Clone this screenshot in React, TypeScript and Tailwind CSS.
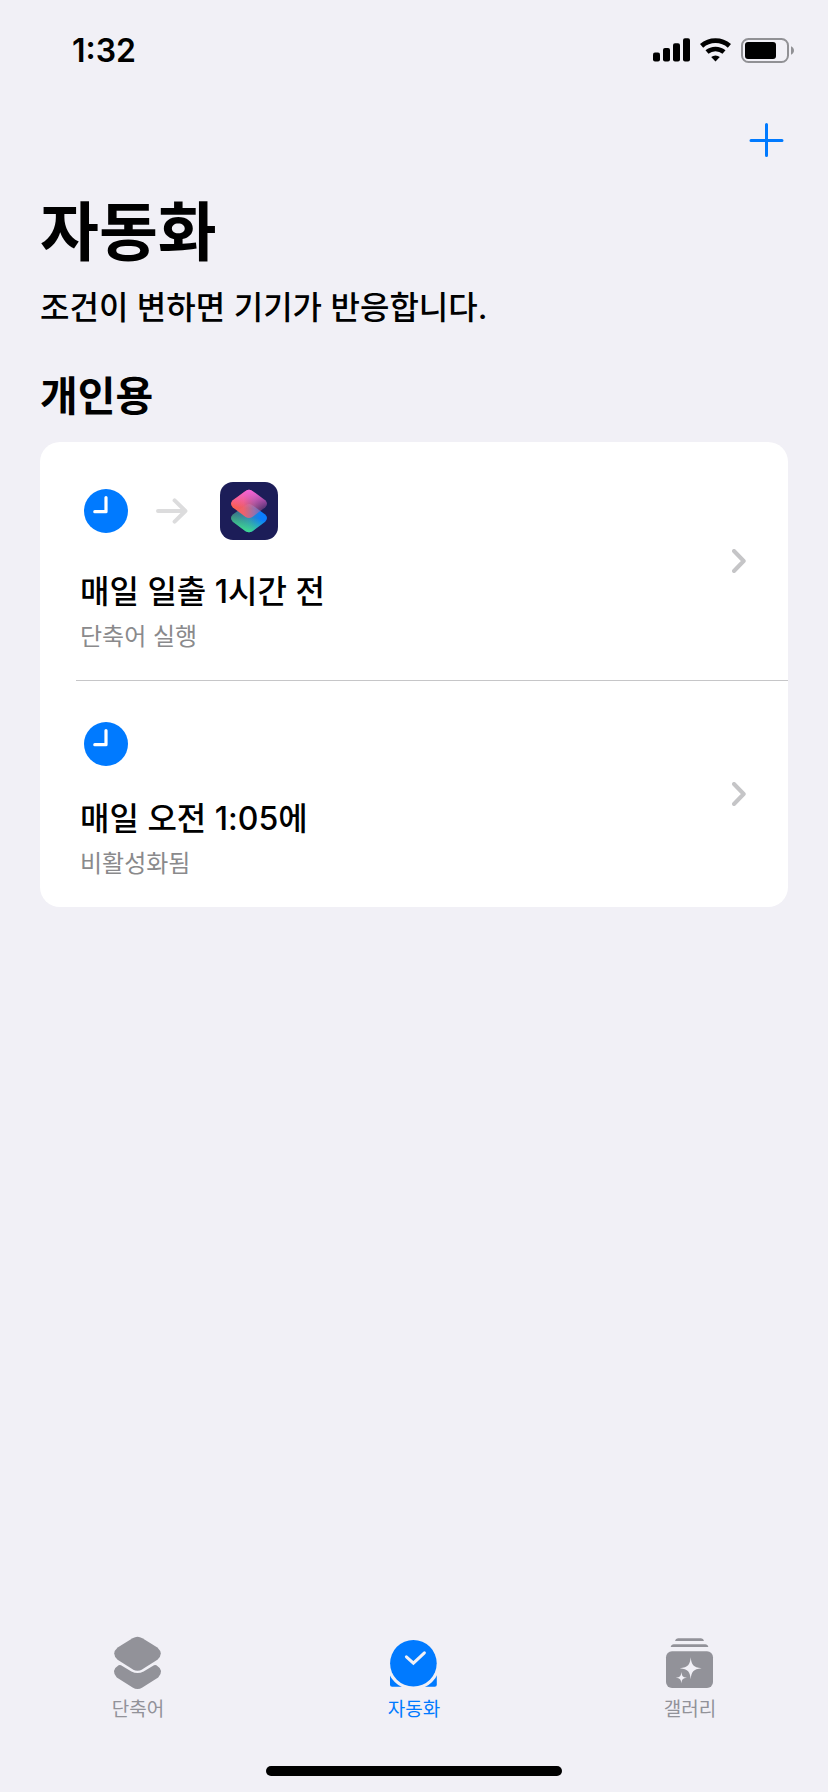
import type { ReactNode } from "react";
import clsx from "clsx";

/* ---------- Status bar icons ---------- */

function SignalIcon() {
  return (
    <svg width="37" height="24" viewBox="0 0 37 24" fill="currentColor" aria-hidden="true">
      <rect x="0" y="14.5" width="7" height="9" rx="2" />
      <rect x="10" y="10" width="7" height="13.5" rx="2" />
      <rect x="20" y="5.2" width="7" height="18.3" rx="2" />
      <rect x="30" y="0.2" width="7" height="23.3" rx="2" />
    </svg>
  );
}

function WifiIcon() {
  return (
    <svg width="31" height="24" viewBox="0 0 31 24" fill="none" stroke="currentColor" aria-hidden="true">
      <path d="M1.6 7.9A21 21 0 0 1 29.4 7.9" strokeWidth="4.8" />
      <path d="M7 14.1A13 13 0 0 1 24 14.1" strokeWidth="4.6" />
      <path d="M11.2 19.1A6.6 6.6 0 0 1 19.8 19.1L15.5 23.6Z" fill="currentColor" stroke="none" />
    </svg>
  );
}

function BatteryIcon() {
  return (
    <svg width="53" height="25" viewBox="0 0 53 25" aria-hidden="true">
      <rect x="1" y="1" width="46" height="23" rx="6.5" fill="none" stroke="#919195" strokeWidth="2" />
      <rect x="4" y="4" width="31" height="17" rx="3" fill="#000" />
      <path d="M50 8.2C51.8 9 53 10.6 53 12.5S51.8 16 50 16.8Z" fill="#919195" />
    </svg>
  );
}

/* ---------- Content icons ---------- */

function PlusIcon() {
  return (
    <svg width="36" height="36" viewBox="0 0 36 36" fill="none" stroke="currentColor" strokeWidth="3" strokeLinecap="round" aria-hidden="true">
      <path d="M18.5 2.5V33.5M3 18.5H34" />
    </svg>
  );
}

function ClockIcon() {
  return (
    <svg width="44" height="44" viewBox="0 0 44 44" aria-hidden="true">
      <circle cx="22" cy="22" r="22" fill="#007aff" />
      <path d="M22 8.5V22.7H10.8" fill="none" stroke="#fff" strokeWidth="3.2" strokeLinecap="round" strokeLinejoin="round" />
    </svg>
  );
}

function ArrowIcon() {
  return (
    <svg width="32" height="26" viewBox="0 0 32 26" fill="none" stroke="#dcdcdd" strokeWidth="4" strokeLinecap="round" strokeLinejoin="round" aria-hidden="true">
      <path d="M2 13H29M18.6 2.4L29.4 13L18.6 23.6" />
    </svg>
  );
}

function ChevronIcon() {
  return (
    <svg width="14" height="24" viewBox="0 0 14 24" fill="none" stroke="#c5c5c7" strokeWidth="4" strokeLinecap="round" strokeLinejoin="round" className="shrink-0" aria-hidden="true">
      <path d="M2 2L11.7 12L2 22" />
    </svg>
  );
}

const DIAMOND =
  "M25.6 8.9Q29 6.6 32.4 8.9L45.2 18.2Q48.8 21.8 45.2 25.4L32.4 34.9Q29 37.2 25.6 34.9L12.8 25.4Q9.2 21.8 12.8 18.2Z";

function ShortcutsAppIcon() {
  return (
    <svg width="58" height="58" viewBox="0 0 58 58" aria-hidden="true">
      <defs>
        <linearGradient id="lowerBase" x1="0" y1="0" x2="1" y2="0">
          <stop offset="0" stopColor="#4a8c8a" stopOpacity="0.7" />
          <stop offset="0.5" stopColor="#2f86b8" />
          <stop offset="0.85" stopColor="#0a7dff" />
        </linearGradient>
        <linearGradient id="lowerTint" x1="0.6" y1="0.45" x2="0.4" y2="1">
          <stop offset="0" stopColor="#3fe08f" stopOpacity="0" />
          <stop offset="1" stopColor="#3fe08f" />
        </linearGradient>
        <linearGradient id="upperBase" x1="0" y1="0.5" x2="1" y2="0.5">
          <stop offset="0" stopColor="#ff5f4a" />
          <stop offset="0.35" stopColor="#f7606a" stopOpacity="0.95" />
          <stop offset="0.65" stopColor="#c9689c" stopOpacity="0.7" />
          <stop offset="1" stopColor="#a04f98" stopOpacity="0.3" />
        </linearGradient>
        <linearGradient id="upperTint" x1="0.5" y1="0" x2="0.45" y2="0.65">
          <stop offset="0" stopColor="#f763dc" />
          <stop offset="1" stopColor="#f763dc" stopOpacity="0" />
        </linearGradient>
      </defs>
      <rect width="58" height="58" rx="13" fill="#1c1d58" />
      <g transform="translate(0 14.3)">
        <path d={DIAMOND} fill="url(#lowerBase)" />
        <path d={DIAMOND} fill="url(#lowerTint)" />
      </g>
      <path d={DIAMOND} fill="url(#upperBase)" />
      <path d={DIAMOND} fill="url(#upperTint)" />
    </svg>
  );
}

/* ---------- Tab icons ---------- */

function LayersIcon() {
  return (
    <svg width="56" height="56" viewBox="0 0 56 56" fill="currentColor" aria-hidden="true">
      <path d="M22.6 2.2Q27.5 -0.8 32.4 2.2L47.4 11.4Q54.2 17.6 47.4 23.8L32.4 33.2Q27.5 36.2 22.6 33.2L7.6 23.8Q0.8 17.6 7.6 11.4Z" />
      <path d="M8.6 29.3Q9.8 28.5 11 29.3L21.4 35.4Q27.5 38.6 33.6 35.4L44 29.3Q45.2 28.5 46.4 29.3Q54.6 34.4 48.2 41.4L32.4 51.5Q27.5 54.5 22.6 51.5L6.8 41.4Q0.4 34.4 8.6 29.3Z" />
    </svg>
  );
}

function AutomationIcon() {
  return (
    <svg width="56" height="56" viewBox="0 0 56 56" aria-hidden="true">
      <path d="M4 38.5H50.8V48.7Q50.8 50.8 48.7 50.8H6.1Q4 50.8 4 48.7Z" fill="currentColor" />
      <circle cx="27.4" cy="27.3" r="26.5" fill="#f1f0f6" />
      <circle cx="27.4" cy="27.3" r="23.3" fill="currentColor" />
      <path d="M20.4 20.8L27.4 27.2L38.4 16.8" fill="none" stroke="#f1f0f6" strokeWidth="3" strokeLinecap="round" strokeLinejoin="miter" />
    </svg>
  );
}

function GalleryIcon() {
  return (
    <svg width="56" height="56" viewBox="0 0 56 56" fill="currentColor" aria-hidden="true">
      <path d="M13 5Q13.6 2.2 16 2.2H39Q41.4 2.2 42 5Z" />
      <path d="M8.7 11Q9.3 8.2 11.8 8.2H43.2Q45.7 8.2 46.3 11Z" />
      <rect x="4" y="15.3" width="47" height="36.8" rx="6" />
      <g fill="#f1f0f6">
        <path d="M28.7 21.3C29.6 29 31 31.2 39.6 32.3C31 33.4 29.6 35.6 28.7 43.3C27.8 35.6 26.4 33.4 17.8 32.3C26.4 31.2 27.8 29 28.7 21.3Z" />
        <path d="M19.4 36C19.9 40 20.6 41.2 25 41.7C20.6 42.2 19.9 43.4 19.4 47.4C18.9 43.4 18.2 42.2 13.8 41.7C18.2 41.2 18.9 40 19.4 36Z" />
      </g>
    </svg>
  );
}

/* ---------- Automation row ---------- */

interface AutomationRowProps {
  title: string;
  subtitle: string;
  icons: ReactNode;
}

function AutomationRow({ title, subtitle, icons }: AutomationRowProps) {
  return (
    <a href="#" className="flex items-center justify-between pr-[42px] pl-10">
      <div className="pt-10 pb-7">
        <div className="flex min-h-[46px] items-center pl-1">{icons}</div>
        <h3 className="mt-8 text-[32px] leading-10 font-medium">{title}</h3>
        <p className="mt-2.5 text-2xl leading-[30px] text-[#8a8a8c]">{subtitle}</p>
      </div>
      <ChevronIcon />
    </a>
  );
}

const tabs = [
  { label: "단축어", icon: <LayersIcon />, active: false },
  { label: "자동화", icon: <AutomationIcon />, active: true },
  { label: "갤러리", icon: <GalleryIcon />, active: false },
];

export default function App() {
  return (
    <div className="flex min-h-screen flex-col bg-[#f1f0f6] font-['Inter','Noto_Sans_CJK_KR',sans-serif] text-black">
      {/* Status bar */}
      <div className="flex h-[100px] items-center justify-between pr-[34px] pl-[72px]">
        <span className="pt-0.5 text-[32px] leading-10 font-semibold">1:32</span>
        <div className="flex items-center gap-2.5">
          <SignalIcon />
          <WifiIcon />
          <BatteryIcon />
        </div>
      </div>

      <header className="flex h-20 items-center justify-end pr-11">
        <button type="button" aria-label="추가" className="text-[#007aff]">
          <PlusIcon />
        </button>
      </header>

      <main className="flex-1 px-10">
        <h1 className="mt-3 text-[64px] leading-20 font-bold">자동화</h1>
        <p className="mt-4 text-[32px] leading-10 font-medium">조건이 변하면 기기가 반응합니다.</p>
        <h2 className="mt-10 text-[41px] leading-14 font-bold">개인용</h2>

        <ul className="mt-[18px] overflow-hidden rounded-[20px] bg-white">
          <li>
            <AutomationRow
              title="매일 일출 1시간 전"
              subtitle="단축어 실행"
              icons={
                <>
                  <ClockIcon />
                  <span className="mr-8 ml-7">
                    <ArrowIcon />
                  </span>
                  <ShortcutsAppIcon />
                </>
              }
            />
            <div className="ml-9 h-px bg-[#c6c6c8]" />
          </li>
          <li>
            <AutomationRow title="매일 오전 1:05에" subtitle="비활성화됨" icons={<ClockIcon />} />
          </li>
        </ul>
      </main>

      {/* Tab bar */}
      <nav className="grid grid-cols-3">
        {tabs.map((tab) => (
          <button
            key={tab.label}
            type="button"
            aria-current={tab.active ? "page" : undefined}
            className={clsx("flex flex-col items-center", tab.active ? "text-[#007aff]" : "text-[#929299]")}
          >
            {tab.icon}
            <span className="mt-1 text-[19px] leading-7">{tab.label}</span>
          </button>
        ))}
      </nav>

      {/* Home indicator */}
      <div className="flex justify-center pt-[42px] pb-4">
        <div className="h-2.5 w-[296px] rounded-full bg-black" />
      </div>
    </div>
  );
}
